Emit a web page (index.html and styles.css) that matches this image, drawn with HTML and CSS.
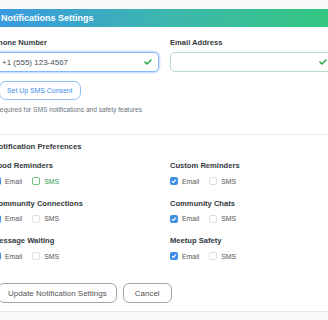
FILE: index.html
```html
<!DOCTYPE html>
<html lang="en">
<head>
    <meta charset="UTF-8">
    <meta name="viewport" content="width=device-width, initial-scale=1.0">
    <title>Notifications Settings</title>
    <link rel="stylesheet" href="styles.css">
</head>
<body>

<div class="card">
    <div class="card-header">Notifications Settings</div>

    <form class="card-body">
        <div class="contact-row">
            <div class="field">
                <label class="field-label" for="phone">Phone Number</label>
                <div class="input-box focused">
                    <input type="tel" id="phone" value="+1 (555) 123-4567">
                    <svg class="valid-check" width="8" height="6" viewBox="0 0 8 6"><path d="M1 3.1 L3 5 L7 1" fill="none" stroke="#28a745" stroke-width="1.5" stroke-linecap="round" stroke-linejoin="round"/></svg>
                </div>
                <!-- SMS consent -->
                <button type="button" class="btn-consent">Set Up SMS Consent</button>
                <p class="hint">Required for SMS notifications and safety features</p>
            </div>
            <div class="field">
                <label class="field-label" for="email">Email Address</label>
                <div class="input-box valid">
                    <input type="email" id="email" value="">
                    <svg class="valid-check" width="8" height="6" viewBox="0 0 8 6"><path d="M1 3.1 L3 5 L7 1" fill="none" stroke="#28a745" stroke-width="1.5" stroke-linecap="round" stroke-linejoin="round"/></svg>
                </div>
            </div>
        </div>

        <hr class="divider">

        <h3 class="section-title">Notification Preferences</h3>

        <div class="prefs">
            <div class="pref">
                <div class="pref-name">Food Reminders</div>
                <div class="options">
                    <label class="option"><span class="box checked"><svg width="8" height="8" viewBox="0 0 8 8"><path d="M2 4.1 L3.4 5.5 L6 2.6" fill="none" stroke="#fff" stroke-width="1.2"/></svg></span>Email</label>
                    <label class="option sms-on"><span class="box"></span>SMS</label>
                </div>
            </div>
            <div class="pref">
                <div class="pref-name">Custom Reminders</div>
                <div class="options">
                    <label class="option"><span class="box checked"><svg width="8" height="8" viewBox="0 0 8 8"><path d="M2 4.1 L3.4 5.5 L6 2.6" fill="none" stroke="#fff" stroke-width="1.2"/></svg></span>Email</label>
                    <label class="option"><span class="box"></span>SMS</label>
                </div>
            </div>
            <div class="pref">
                <div class="pref-name">Community Connections</div>
                <div class="options">
                    <label class="option"><span class="box checked"><svg width="8" height="8" viewBox="0 0 8 8"><path d="M2 4.1 L3.4 5.5 L6 2.6" fill="none" stroke="#fff" stroke-width="1.2"/></svg></span>Email</label>
                    <label class="option"><span class="box"></span>SMS</label>
                </div>
            </div>
            <div class="pref">
                <div class="pref-name">Community Chats</div>
                <div class="options">
                    <label class="option"><span class="box checked"><svg width="8" height="8" viewBox="0 0 8 8"><path d="M2 4.1 L3.4 5.5 L6 2.6" fill="none" stroke="#fff" stroke-width="1.2"/></svg></span>Email</label>
                    <label class="option"><span class="box"></span>SMS</label>
                </div>
            </div>
            <div class="pref">
                <div class="pref-name">Message Waiting</div>
                <div class="options">
                    <label class="option"><span class="box checked"><svg width="8" height="8" viewBox="0 0 8 8"><path d="M2 4.1 L3.4 5.5 L6 2.6" fill="none" stroke="#fff" stroke-width="1.2"/></svg></span>Email</label>
                    <label class="option"><span class="box"></span>SMS</label>
                </div>
            </div>
            <div class="pref">
                <div class="pref-name">Meetup Safety</div>
                <div class="options">
                    <label class="option"><span class="box checked"><svg width="8" height="8" viewBox="0 0 8 8"><path d="M2 4.1 L3.4 5.5 L6 2.6" fill="none" stroke="#fff" stroke-width="1.2"/></svg></span>Email</label>
                    <label class="option"><span class="box"></span>SMS</label>
                </div>
            </div>
        </div>

        <!-- actions -->
        <div class="actions">
            <button type="button" class="btn btn-update">Update Notification Settings</button>
            <button type="button" class="btn">Cancel</button>
        </div>
    </form>
</div>

</body>
</html>
```

FILE: styles.css
```css
html, body {
    overflow: hidden;
}
body {
    margin: 0;
    padding-top: 9px;
    font-family: "Liberation Sans", Arial, sans-serif;
    background-color: #f8f9fa;
    color: #343a40;
}
.card {
    width: 361px;
    margin-left: -16px;
    background-color: #ffffff;
    border-bottom: 1px solid #e3e6ea;
}
.card-header {
    height: 18px;
    line-height: 18px;
    padding-left: 17px;
    font-size: 9px;
    font-weight: bold;
    color: #ffffff;
    background: linear-gradient(90deg, #3897e4 0%, #3db6ae 50%, #33c97c 100%);
}
.card-body {
    padding: 11px 9px 8px;
}
.contact-row {
    display: grid;
    grid-template-columns: 166px 166px;
    column-gap: 11px;
}
.field-label {
    display: block;
    font-size: 7.6px;
    font-weight: bold;
    line-height: 10px;
    margin-bottom: 4px;
    color: #343a40;
}
.input-box {
    display: flex;
    align-items: center;
    height: 20px;
    box-sizing: border-box;
    padding: 0 6px 0 8px;
    border: 1px solid #ced4da;
    border-radius: 5px;
    background-color: #ffffff;
}
.input-box.focused {
    border-color: #86b7fe;
    box-shadow: 0 0 0 1.5px rgba(13, 110, 253, 0.18);
}
.input-box.valid {
    border-color: #b5dcc0;
    padding-right: 8px;
}
.input-box input {
    flex: 1;
    min-width: 0;
    border: none;
    outline: none;
    padding: 0;
    font-family: inherit;
    font-size: 8px;
    color: #495057;
    background: transparent;
}
.valid-check {
    flex: none;
}
.btn-consent {
    display: block;
    height: 19px;
    margin: 9px 0 0 6px;
    padding: 0 7px;
    font-family: inherit;
    font-size: 6.9px;
    color: #3b8ae6;
    background-color: #ffffff;
    border: 1px solid #90bff3;
    border-radius: 7px;
}
.hint {
    margin: 5px 0 0 2px;
    font-size: 6.6px;
    line-height: 9px;
    color: #6c757d;
}
.divider {
    margin: 20px 0 0;
    border: none;
    border-top: 1px solid #e9ecef;
}
.section-title {
    margin: 7px 0 0;
    font-size: 7.7px;
    font-weight: bold;
    line-height: 10px;
    color: #343a40;
}
.prefs {
    display: grid;
    grid-template-columns: 166px 166px;
    column-gap: 11px;
    row-gap: 12.5px;
    margin-top: 9px;
}
.pref-name {
    font-size: 7.6px;
    font-weight: bold;
    line-height: 10px;
    color: #343a40;
}
.options {
    display: flex;
    gap: 10px;
    margin-top: 5px;
    height: 10px;
}
.option {
    display: flex;
    align-items: center;
    gap: 4px;
    font-size: 6.9px;
    color: #555;
}
.box {
    display: block;
    width: 8px;
    height: 8px;
    box-sizing: border-box;
    border: 1px solid #dcdfe3;
    border-radius: 2px;
    background-color: #ffffff;
}
.box.checked {
    border: none;
    background-color: #3d8fe8;
}
.box svg {
    display: block;
}
.sms-on {
    color: #2f9e52;
}
.sms-on .box {
    border-color: #6cc17f;
}
.actions {
    display: flex;
    gap: 6px;
    margin-top: 22px;
}
.btn {
    height: 20px;
    padding: 0 11px;
    font-family: inherit;
    font-size: 8px;
    color: #555;
    background-color: #ffffff;
    border: 1px solid #a5a5a5;
    border-radius: 6px;
}
.btn-update {
    margin-left: 5px;
    padding: 0 9px;
}
```
